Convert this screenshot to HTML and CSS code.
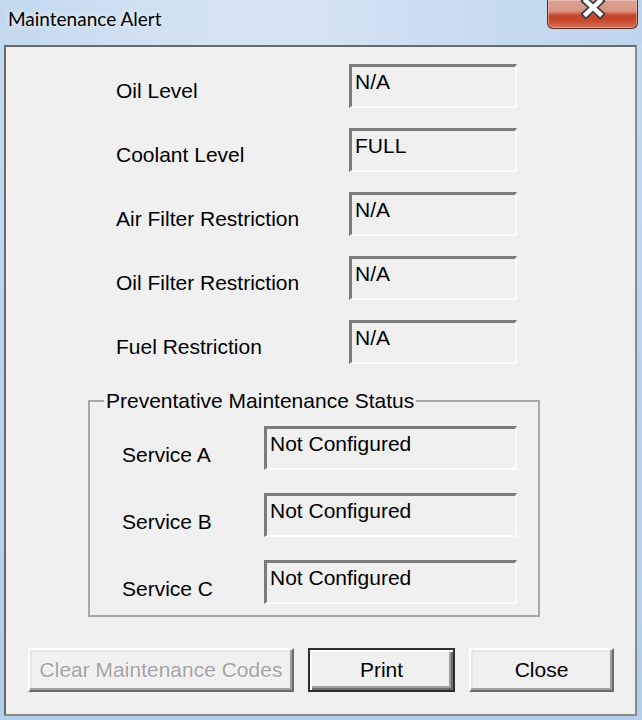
FILE: index.html
```html
<!DOCTYPE html>
<html>
<head>
<meta charset="utf-8">
<title>Maintenance Alert</title>
<link rel="stylesheet" href="styles.css">
</head>
<body>
<div class="window">
  <div class="titlebar">
    <span class="title">Maintenance Alert</span>
    <div class="close-btn">
      <svg class="close-x" width="91" height="28" viewBox="0 0 91 28">
        <path d="M39 2 L53 15 M53 2 L39 15" stroke="#3d3d44" stroke-width="8" stroke-linecap="square" fill="none"/>
        <path d="M39 2 L53 15 M53 2 L39 15" stroke="#ffffff" stroke-width="4.5" stroke-linecap="square" fill="none"/>
      </svg>
    </div>
  </div>
  <div class="client">
    <div class="fields">
      <span class="label">Oil Level</span><div class="field">N/A</div>
      <span class="label">Coolant Level</span><div class="field">FULL</div>
      <span class="label">Air Filter Restriction</span><div class="field">N/A</div>
      <span class="label">Oil Filter Restriction</span><div class="field">N/A</div>
      <span class="label">Fuel Restriction</span><div class="field">N/A</div>
    </div>
    <fieldset class="group">
      <legend class="group-title">Preventative Maintenance Status</legend>
      <div class="service-grid">
        <span class="label service-label">Service A</span><div class="field">Not Configured</div>
        <span class="label service-label">Service B</span><div class="field">Not Configured</div>
        <span class="label service-label">Service C</span><div class="field">Not Configured</div>
      </div>
    </fieldset>
    <div class="buttons">
      <button class="btn btn-clear" disabled>Clear Maintenance Codes</button>
      <button class="btn btn-print">Print</button>
      <button class="btn btn-close">Close</button>
    </div>
  </div>
</div>
</body>
</html>
```
FILE: styles.css
```css
html, body {
  margin: 0;
  padding: 0;
}

body {
  width: 642px;
  height: 720px;
  overflow: hidden;
  background: linear-gradient(180deg, #c4d9ef 0%, #bcd3ec 50%, #b4cde9 100%);
  font-family: "Liberation Sans", Arial, sans-serif;
}

.window {
  width: 642px;
  height: 720px;
  display: flex;
  flex-direction: column;
}

.titlebar {
  height: 45px;
  flex: none;
  display: flex;
  align-items: flex-start;
  background: linear-gradient(90deg, #c3d8ee 0%, #cfe0f2 20%, #d6e5f4 45%, #c9dcf0 70%, #bfd5ed 100%);
}

.title {
  font-family: Lato, "Open Sans", sans-serif;
  font-size: 19px;
  line-height: 24px;
  color: #000;
  padding: 7px 0 0 8px;
  text-shadow: 0 0 6px rgba(255, 255, 255, 0.9);
}

.close-btn {
  margin-left: auto;
  margin-right: 4px;
  width: 91px;
  height: 29px;
  box-sizing: border-box;
  border: 1px solid #5a2a22;
  border-top: none;
  border-radius: 0 0 6px 6px;
  background: linear-gradient(180deg, #dca294 0%, #d99483 40%, #cf6a55 48%, #c4432b 56%, #c64a30 75%, #d7735a 100%);
  box-shadow: inset 0 0 0 1px rgba(255, 220, 210, 0.45);
  overflow: hidden;
}

.close-x {
  display: block;
  margin: -1px 0 0 -1px;
}

.client {
  flex: 1;
  margin: 0 5px 4px 4px;
  background: #f0f0f0;
  border: 2px solid;
  border-color: #6a6a6a #8a8a8a #8a8a8a #6a6a6a;
}

.fields {
  display: grid;
  grid-template-columns: 233px 168px;
  row-gap: 20px;
  padding: 17px 0 0 110px;
}

.label {
  font-size: 21px;
  line-height: 24px;
  color: #000;
  margin-top: 15px;
  white-space: nowrap;
}

.field {
  height: 44px;
  box-sizing: border-box;
  border-style: solid;
  border-width: 3px 2px 2px 3px;
  border-color: #7b7b7b #fbfbfb #fbfbfb #7b7b7b;
  padding: 3px 0 0 3px;
  font-size: 21px;
  line-height: 24px;
  color: #000;
  white-space: nowrap;
}

.group {
  margin: 25px 0 0 82px;
  width: 452px;
  box-sizing: border-box;
  border: 2px solid #a8a8a8;
  padding: 13px 0 11px 0;
  min-inline-size: 0;
}

.group-title {
  margin-left: 14px;
  padding: 0 2px;
  font-size: 21px;
  line-height: 24px;
  color: #000;
}

.service-grid {
  display: grid;
  grid-template-columns: 142px 253px;
  row-gap: 23px;
  margin-left: 32px;
}

.service-label {
  margin-top: 17px;
}

.buttons {
  display: flex;
  gap: 14px;
  margin: 31px 0 0 22px;
}

.btn {
  height: 44px;
  box-sizing: border-box;
  font-family: "Liberation Sans", Arial, sans-serif;
  font-size: 21px;
  line-height: 24px;
  color: #000;
  background: #f0f0f0;
  border: 2px solid;
  border-color: #ffffff #6b6b6b #6b6b6b #ffffff;
  box-shadow: inset -2px -2px 0 #a0a0a0, inset 2px 2px 0 #e6e6e6;
  padding: 0;
  margin: 0;
}

.btn-clear {
  width: 266px;
  color: #a3a3a3;
  text-shadow: 1px 1px 0 #ffffff;
}

.btn-print {
  width: 147px;
  border-color: #2e2e2e;
  box-shadow: inset 2px 2px 0 #ffffff, inset -2px -2px 0 #6b6b6b, inset -4px -4px 0 #a0a0a0;
}

.btn-close {
  width: 145px;
}
```
